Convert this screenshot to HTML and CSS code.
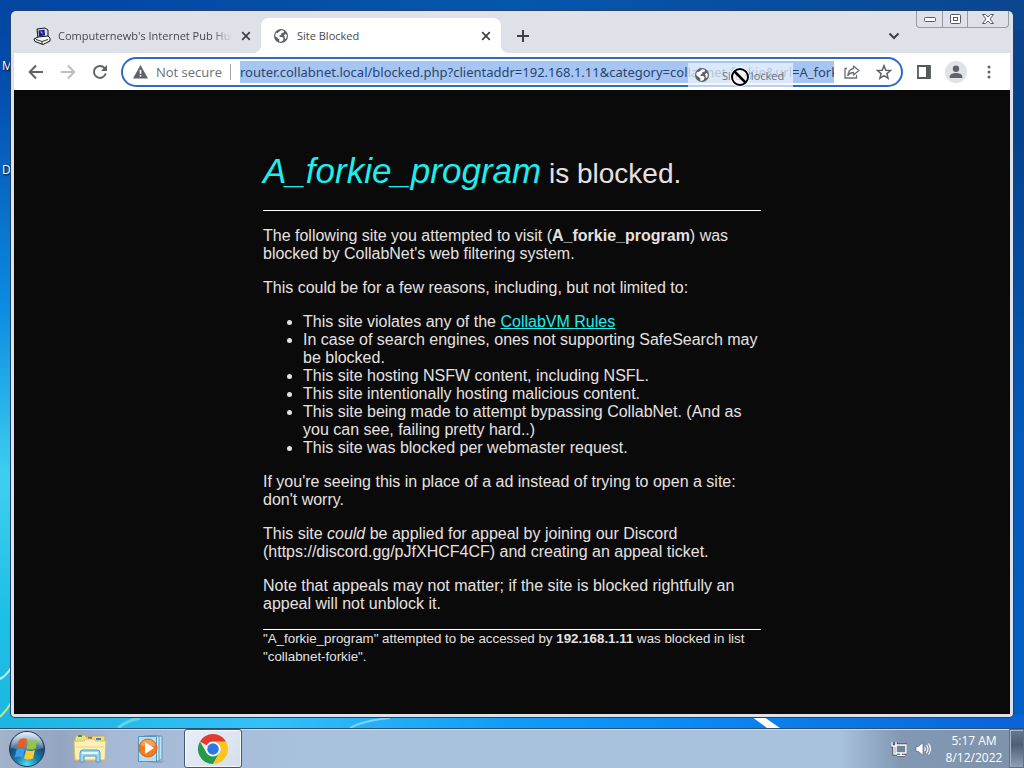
FILE: index.html
```html
<!DOCTYPE html>
<html lang="en">
<head>
<meta charset="utf-8">
<title>Site Blocked</title>
<link rel="stylesheet" href="styles.css">
</head>
<body>
<svg class="defs" aria-hidden="true">
  <symbol id="globe" viewBox="0 0 16 16">
    <circle cx="8" cy="8" r="7" fill="#5f6368"/>
    <path d="M8 2.2c1.400 0 2.300.3 3.200.9l-.7 1.600-2 .3-.3 1.800-2 .9.7 1.200 2.400.1 1.300 1.500-.6 2-1.900 1.200c-.9.2-1.400.1-2-.1l.3-2-1.700-1.700-2.300-1.600c-.2-1.500.1-2.600.8-3.600l1.500.4 1.200-1.100z" fill="#fff"/>
    <path d="M12.400 6.100l1.300 1c.2 1.500-.1 2.800-.9 4l-1.100-.9.1-1.600-1-1.100z" fill="#fff"/>
  </symbol>
  <symbol id="close" viewBox="0 0 10 10">
    <path d="M1.200 1.200l7.600 7.600M8.800 1.200L1.200 8.800" stroke="#3c4043" stroke-width="1.700"/>
  </symbol>
</svg>
<div class="desktop">
  <span class="shortcut shortcut-m">M</span>
  <span class="shortcut shortcut-d">D</span>
  <svg class="streaks" viewBox="0 0 1024 768" preserveAspectRatio="none" aria-hidden="true">
    <path d="M0 679Q6 676 11 668" stroke="#b8f0fb" stroke-width="2" fill="none"/>
    <path d="M0 717Q7 710 11 703" stroke="#b9e88a" stroke-width="2" fill="none"/>
    <path d="M118 728q8-7 22-10" stroke="#5fd4e4" stroke-width="3" fill="none"/>
    <path d="M350 728q12-7 40-10" stroke="#7cd2fb" stroke-width="2" fill="none"/>
    <path d="M752 717h12l16 11h-13z" fill="#fff"/>
  </svg>
  <main class="window">
    <div class="caption">
      <button class="cap" aria-label="Minimize"><svg width="14" height="8" viewBox="0 0 14 8"><rect x="1.500" y="2.500" width="11" height="4" rx="1" fill="#fff" stroke="#555b66"/></svg></button>
      <button class="cap" aria-label="Maximize"><svg width="13" height="12" viewBox="0 0 13 12"><rect x="1.500" y="1.500" width="10" height="9" rx="1" fill="#fff" stroke="#555b66"/><rect x="4.500" y="4.500" width="4" height="3" fill="#fff" stroke="#555b66"/></svg></button>
      <button class="cap cap-close" aria-label="Close window"><svg width="14" height="12" viewBox="0 0 14 12"><path d="M1.500 1.500h3L7 4l2.500-2.500h3L9 6l3.500 4.500h-3L7 8l-2.500 2.500h-3L5 6z" fill="#fff" stroke="#555b66"/></svg></button>
    </div>
    <div class="tabs">
      <div class="tab">
        <svg class="favicon" width="18" height="18" viewBox="0 0 18 18" aria-hidden="true">
          <path d="M4 2l8-1 3 2v6l-3 3-7 0z" fill="#dfe0e8" stroke="#111"/>
          <path d="M5.500 3.500l6-.7.5 5.500-6 1.200z" fill="#15189a"/>
          <path d="M7 4.500h2.500v3z" fill="#9db5f5"/>
          <path d="M1 12l4-2 10-1 2 2v3l-7 3.500-8-3z" fill="#f4f4f4" stroke="#111"/>
          <path d="M3 12.500l6 2 6-2M9 14.500v3" stroke="#333" fill="none"/>
        </svg>
        <button class="title fade">Computernewb's Internet Pub Hub</button>
        <button class="x" aria-label="Close tab"><svg width="10" height="10"><use href="#close"/></svg></button>
      </div>
      <div class="tab active">
        <svg class="favicon" width="16" height="16" aria-hidden="true"><use href="#globe"/></svg>
        <button class="title">Site Blocked</button>
        <button class="x" aria-label="Close tab"><svg width="10" height="10"><use href="#close"/></svg></button>
      </div>
      <button class="newtab" aria-label="New tab"><svg width="14" height="14" viewBox="0 0 14 14"><path d="M7 1v12M1 7h12" stroke="#3c4043" stroke-width="2"/></svg></button>
      <button class="search" aria-label="Search tabs"><svg width="12" height="8" viewBox="0 0 12 8"><path d="M1.500 1.500L6 6l4.500-4.500" fill="none" stroke="#3c4043" stroke-width="2"/></svg></button>
    </div>
    <div class="toolbar">
      <button class="nav" aria-label="Back"><svg width="16" height="16" viewBox="0 0 16 16"><path d="M15 8H2M8 1.500L1.700 8 8 14.500" fill="none" stroke="#5f6368" stroke-width="2"/></svg></button>
      <button class="nav" aria-label="Forward"><svg width="16" height="16" viewBox="0 0 16 16"><path d="M1 8h13M8 1.500L14.300 8 8 14.500" fill="none" stroke="#bcbec1" stroke-width="2"/></svg></button>
      <button class="nav" aria-label="Reload"><svg width="16" height="16" viewBox="0 0 16 16"><path d="M13.700 9.500A6 6 0 1 1 12.500 4L14 5.500" fill="none" stroke="#5f6368" stroke-width="2"/><path d="M15 1v6H9z" fill="#5f6368"/></svg></button>
      <div class="omnibox">
        <svg width="15" height="14" viewBox="0 0 15 14" aria-hidden="true"><path d="M7.500 0L15 13.500H0z" fill="#5f6368"/><path d="M6.700 4.700h1.600v4H6.700zM6.700 10h1.600v1.600H6.700z" fill="#fff"/></svg>
        <label class="secure" for="url">Not secure</label>
        <input class="url" id="url" type="text" value="router.collabnet.local/blocked.php?clientaddr=192.168.1.11&amp;category=collabnet-forkie&amp;url=A_forkie_program">
        <button class="act" aria-label="Share"><svg width="16" height="14" viewBox="0 0 16 14"><path d="M3 3.500H1v9.500h11.500v-3" fill="none" stroke="#6b6f74" stroke-width="1.300"/><path d="M9.500 1l5.500 4.500L9.500 10V7.500Q6 7.500 3.800 10.500 4.300 4.500 9.500 3.500z" fill="none" stroke="#6b6f74" stroke-width="1.300" stroke-linejoin="round"/></svg></button>
        <button class="act" aria-label="Bookmark"><svg width="16" height="16" viewBox="0 0 16 16"><path d="M8 1.700l1.800 4.500 4.800.3-3.700 3.100 1.200 4.700L8 11.700l-4.100 2.600 1.200-4.700L1.400 6.500l4.800-.3z" fill="none" stroke="#5f6368" stroke-width="1.500"/></svg></button>
      </div>
      <button class="side" aria-label="Side panel"><svg width="14" height="14" viewBox="0 0 14 14"><path d="M1 1h12v12H1z" fill="none" stroke="#55595e" stroke-width="1.800"/><path d="M9 1h4v12H9z" fill="#55595e"/></svg></button>
      <button class="profile" aria-label="Profile"><svg width="14" height="14" viewBox="0 0 14 14"><circle cx="7" cy="3.800" r="3.200" fill="#5f6368"/><path d="M.7 13v-1.500C.7 9 4.500 8 7 8s6.300 1 6.300 3.500V13z" fill="#5f6368"/></svg></button>
      <button class="menu" aria-label="Menu"><svg width="4" height="14" viewBox="0 0 4 14"><circle cx="2" cy="2" r="1.500" fill="#5f6368"/><circle cx="2" cy="7" r="1.500" fill="#5f6368"/><circle cx="2" cy="12" r="1.500" fill="#5f6368"/></svg></button>
    </div>
    <section class="page">
      <article class="content">
        <h1><em>A_forkie_program</em> is blocked.</h1>
        <hr>
        <p>The following site you attempted to visit (<b>A_forkie_program</b>) was blocked by CollabNet's web filtering system.</p>
        <p>This could be for a few reasons, including, but not limited to:</p>
        <ul>
          <li>This site violates any of the <a href="#rules">CollabVM Rules</a></li>
          <li>In case of search engines, ones not supporting SafeSearch may be blocked.</li>
          <li>This site hosting NSFW content, including NSFL.</li>
          <li>This site intentionally hosting malicious content.</li>
          <li>This site being made to attempt bypassing CollabNet. (And as you can see, failing pretty hard..)</li>
          <li>This site was blocked per webmaster request.</li>
        </ul>
        <p>If you're seeing this in place of a ad instead of trying to open a site: don't worry.</p>
        <p>This site <i>could</i> be applied for appeal by joining our Discord (https://discord.gg/pJfXHCF4CF) and creating an appeal ticket.</p>
        <p>Note that appeals may not matter; if the site is blocked rightfully an appeal will not unblock it.</p>
        <hr>
        <footer>"A_forkie_program" attempted to be accessed by <b>192.168.1.11</b> was blocked in list "collabnet-forkie".</footer>
      </article>
    </section>
  </main>
  <div class="ghost">
    <svg width="16" height="16" aria-hidden="true"><use href="#globe"/></svg>
    <span>Site Blocked</span>
  </div>
  <svg class="cursor" viewBox="0 0 20 20" aria-hidden="true"><circle cx="10" cy="10" r="8" fill="none" stroke="#fff" stroke-width="4"/><circle cx="10" cy="10" r="8" fill="#fff" fill-opacity=".7" stroke="#000" stroke-width="2"/><path d="M4.500 4.500l11 11" stroke="#000" stroke-width="2.500"/></svg>
  <nav class="taskbar">
    <button class="start" aria-label="Start">
      <svg width="38" height="38" viewBox="0 0 38 38">
        <defs>
          <radialGradient id="orb" cx=".5" cy=".95" r=".9"><stop offset="0" stop-color="#4fe0f5"/><stop offset=".35" stop-color="#1a7fae"/><stop offset=".7" stop-color="#184a74"/><stop offset="1" stop-color="#8fb2cc"/></radialGradient>
          <linearGradient id="gloss" x2="0" y2="1"><stop offset="0" stop-color="#fff" stop-opacity=".75"/><stop offset="1" stop-color="#fff" stop-opacity=".15"/></linearGradient>
        </defs>
        <circle cx="19" cy="19" r="17.500" fill="url(#orb)" stroke="#1b3a58"/>
        <path d="M3 18a16 16 0 0 1 32 0Q19 23 3 18z" fill="url(#gloss)"/>
        <path d="M11 10q4-3 8-1l-2 9q-4-2-8 0z" fill="#ee5a24"/>
        <path d="M20.500 10q4 2 9-.5l-2 9q-5 2-9 0z" fill="#93c83e"/>
        <path d="M8.700 19.500q4-2 8 0l-2 8q-4-2-8 0z" fill="#3e9de8"/>
        <path d="M18 20q4 2 9 0l-2 8.500q-5 2-9 0z" fill="#fcc931"/>
      </svg>
    </button>
    <button class="task" aria-label="Explorer">
      <svg width="36" height="32" viewBox="0 0 36 32">
        <path d="M3 4l3-2h7l1 2h6l1-1h12v24H3z" fill="#f2dc88" stroke="#c7a750"/>
        <path d="M6 2h4v2H6z" fill="#29a34a"/><path d="M16 4h4v2h-4z" fill="#d6503c"/><path d="M24 5h5v2h-5z" fill="#3e83ca"/>
        <path d="M2 8h10l2-2h8l2 2h10l-1 19H3z" fill="#fbf0b5" stroke="#d9be6a"/>
        <path d="M4 14h28" stroke="#e8d58c"/>
        <path d="M8 29V20q0-3 3-3h14q3 0 3 3v9h-4v-6H12v6z" fill="#9cd3f2" stroke="#4d9bcc"/>
        <path d="M10 20h16" stroke="#e4f7ff" stroke-width="2"/>
      </svg>
    </button>
    <button class="task" aria-label="Media Player">
      <svg width="30" height="30" viewBox="0 0 30 30">
        <path d="M22 28l7-2-3 3H10z" fill="#718aa5" opacity=".5"/>
        <path d="M12 2h14v23l-3 2H12z" fill="#c3e4f7" stroke="#5397c1"/>
        <path d="M8 2h15v25H8z" fill="#d1ecfa" stroke="#5397c1"/>
        <path d="M2.500 2.500h18v25h-18z" fill="#b9dcf2" stroke="#5397c1"/>
        <circle cx="12" cy="14" r="9" fill="#ef7c1d" stroke="#d8631c"/>
        <path d="M4.500 11a8 8 0 0 1 15 0q-7 4-15 0z" fill="#ffb777" opacity=".6"/>
        <path d="M9 8l9 6-9 6z" fill="#fff"/>
      </svg>
    </button>
    <button class="task current" aria-label="Chrome">
      <svg width="32" height="32" viewBox="0 0 32 32">
        <path d="M16 16L3 8.500A15 15 0 0 1 29 8.500z" fill="#e33b2e"/>
        <path d="M3 8.500A15 15 0 0 0 16 31l6.500-11.300L16 16 9.500 19.700z" fill="#26994a"/>
        <path d="M29 8.500A15 15 0 0 1 16 31l6.500-11.300A7.500 7.500 0 0 0 16 8.500z" fill="#fbc51b"/>
        <circle cx="16" cy="16" r="7.500" fill="#fff"/><circle cx="16" cy="16" r="5.800" fill="#2a78e4"/>
      </svg>
    </button>
    <div class="tray">
      <button class="sys" aria-label="Network"><svg width="16" height="16" viewBox="0 0 16 16"><path d="M5 4h10v8H5zM1 1v4h4V1M3 5v8h3M6 14.500h8" fill="none" stroke="#2d3a4b" stroke-width="3"/><path d="M5 4h10v8H5z" fill="#72849a" stroke="#fff" stroke-width="1.500"/><path d="M6 14.500h8M10 12v2M1 1v4h4V1M3 5v8h3" fill="none" stroke="#fff" stroke-width="1.500"/></svg></button>
      <button class="sys" aria-label="Volume"><svg width="16" height="16" viewBox="0 0 16 16"><path d="M1 5.500h2.500L8 1.500v13L3.500 10.500H1z" fill="#fff" stroke="#49596d" stroke-width=".6"/><path d="M9.500 6q1.500 2 0 4M11.500 4q3 4 0 8M13.500 2.500q4 5.500 0 11" fill="none" stroke="#fff" stroke-width="1.100"/></svg></button>
      <div class="clock"><time>5:17 AM</time><time>8/12/2022</time></div>
      <button class="peek" aria-label="Show desktop"></button>
    </div>
  </nav>
</div>
</body>
</html>
```
FILE: styles.css
```css
* { box-sizing: border-box; }
body { margin: 0; font-family: "Open Sans", "Noto Sans", sans-serif; }
button { margin: 0; padding: 0; border: 0; background: none; font: inherit; color: inherit; }
svg { display: block; flex: none; }
.defs { position: absolute; width: 0; height: 0; }

.desktop {
  position: relative;
  display: flex;
  flex-direction: column;
  min-height: 100vh;
  overflow: hidden;
  background:
    linear-gradient(90deg, #1ab5e0, #35c0f8 26%, #109cf5 50%, #0c8af5 66%, #0a62d8) bottom 40px left 0 / 100% 13px no-repeat,
    linear-gradient(#0344a0, #0550b0 13%, #0b8ce0 40%, #3dcff0 62%, #1ebfe6 80%, #1ab5e0) left / 40px 100% no-repeat,
    linear-gradient(90deg, #0344a4, #0556ae 50%, #0b4690) top / 100% 30px no-repeat,
    linear-gradient(#0b458e, #064088 15%, #0458b8 55%, #0062c8);
}
.shortcut { position: absolute; left: 2px; font-size: 12px; line-height: 16px; color: #fff; text-shadow: 1px 1px 2px #000; }
.shortcut-m { top: 58px; }
.shortcut-d { top: 162px; }
.streaks { position: absolute; inset: 0; width: 100%; height: 100%; }

.window {
  position: relative;
  flex: 1;
  display: flex;
  flex-direction: column;
  margin: 11px;
  background: #dfe1e8;
  border-radius: 5px 5px 4px 4px;
  box-shadow: 0 0 0 1px #23436c;
}
.caption {
  position: absolute;
  top: 0;
  right: 4px;
  display: flex;
  border: 1px solid #969aa2;
  border-top: 0;
  border-radius: 0 0 4px 4px;
}
.cap { display: flex; align-items: center; justify-content: center; width: 25px; height: 16px; }
.cap + .cap { border-left: 1px solid #969aa2; }
.cap-close { width: 41px; }

.tabs { display: flex; align-items: flex-end; height: 42px; padding-left: 10px; font-size: 11px; color: #45494d; }
.tab { position: relative; display: flex; align-items: center; width: 240px; height: 35px; padding: 0 9px 0 12px; }
.tab .favicon { width: 18px; }
.title { flex: 1; min-width: 0; margin-left: 7px; overflow: hidden; white-space: nowrap; text-align: left; line-height: 18px; }
.fade { -webkit-mask-image: linear-gradient(90deg, #000 88%, transparent); mask-image: linear-gradient(90deg, #000 88%, transparent); }
.x { display: flex; justify-content: center; width: 12px; margin-left: 8px; }
.active { background: #fff; border-radius: 8px 8px 0 0; }
.active .favicon { margin-left: -1px; }
.active::before, .active::after { content: ""; position: absolute; bottom: 0; width: 8px; height: 8px; }
.active::before { left: -8px; background: radial-gradient(circle at 0 0, transparent 8px, #fff 8px); }
.active::after { right: -8px; background: radial-gradient(circle at 100% 0, transparent 8px, #fff 8px); }
.newtab { margin-left: 15px; padding-bottom: 10px; }
.search { margin: 0 113px 13px auto; }

.toolbar { display: flex; align-items: center; height: 37px; margin: 0 3px; padding-left: 14px; background: #fff; }
.nav { margin-right: 16px; }
.nav:nth-child(3) { margin-right: 13px; }
.omnibox {
  flex: 1;
  min-width: 0;
  display: flex;
  align-items: center;
  height: 30px;
  padding: 0 9px 0 10px;
  border: 2px solid #2f6bc4;
  border-radius: 15px;
  font-size: 13px;
}
.secure { margin-left: 8px; padding-right: 8px; border-right: 1px solid #a5a8ac; line-height: 16px; color: #6a6e73; white-space: nowrap; }
.url { flex: 1; min-width: 0; height: 22px; margin-left: 9px; padding: 0; border: 0; outline: 0; background: #a7c5f3; color: #27466f; font: 13px "Noto Sans", sans-serif; }
.act { margin-left: 10px; }
.act + .act { margin-left: 16px; }
.side { margin-left: 14px; }
.profile { display: flex; align-items: center; justify-content: center; width: 22px; height: 22px; margin-left: 14px; border-radius: 50%; background: #dfe2e6; }
.menu { margin: 0 19px 0 20px; }

.page { flex: 1; margin: 0 3px 3px; padding-bottom: 30px; background: #0a0a0a; color: #e6e1e1; font-family: "Liberation Sans", Arial, sans-serif; font-size: 16px; line-height: 18px; }
.content { width: 50%; margin: 0 auto; }
h1 { margin: 0; padding: 61px 0 16px; font-size: 28px; font-weight: 400; line-height: 40px; }
h1 em { font-size: 35px; color: #1eeeee; }
hr { height: 1px; margin: 0; border: 0; background: #fff; }
.content p, .content ul { margin: 16px 0; }
.content ul { padding-left: 40px; }
.content a { color: #1eeeee; }
footer { font-size: smaller; }

.ghost {
  position: absolute;
  top: 63px;
  left: 688px;
  display: flex;
  align-items: center;
  gap: 12px;
  width: 105px;
  height: 24px;
  padding-left: 6px;
  background: rgba(240, 245, 254, .72);
  font-size: 11px;
  color: #66707e;
  white-space: nowrap;
}
.cursor { position: absolute; top: 67px; left: 730px; width: 20px; height: 20px; }

.taskbar {
  position: relative;
  display: flex;
  height: 40px;
  border-top: 1px solid #2d4f70;
  box-shadow: inset 0 1px #cbd9ea;
  background: linear-gradient(90deg, #a3b3ca, #94a5c0 6%, #a6b9d6 11%, #a8c1dd 30%, #a8c1dd 82%, #8298b3 88%, #7f92aa);
}
.start { flex: none; width: 54px; padding-left: 8px; }
.task { display: flex; align-items: center; justify-content: center; width: 61px; margin-left: 5px; }
.task + .task { margin-left: 0; }
.task + .task + .current { width: 58px; margin-left: 3px; border: 1px solid #46586e; border-radius: 3px; background: linear-gradient(135deg, #e9eef5, #d4dfed); box-shadow: inset 0 0 0 1px #f5f8fc; }
.tray { display: flex; align-items: center; margin-left: auto; color: #fff; }
.sys { margin-right: 8px; }
.clock { display: flex; flex-direction: column; align-items: center; width: 70px; font-size: 12px; line-height: 17px; }
.peek { align-self: stretch; width: 15px; border: 1px solid #5d7086; background: linear-gradient(#66798e, #4e6074 40%, #8c9fb5); box-shadow: inset 1px 1px #a9b7c6; }
```
